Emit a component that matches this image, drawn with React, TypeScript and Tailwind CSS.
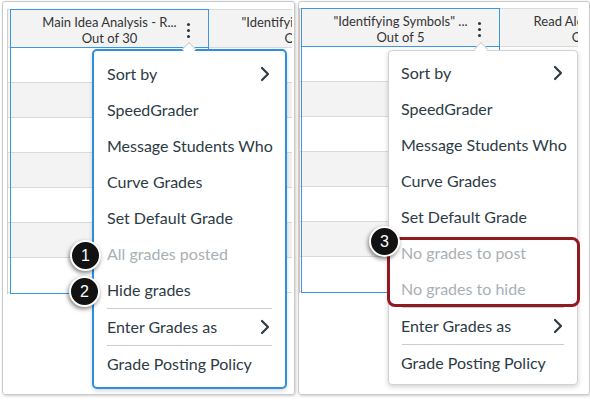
import React from "react";

const menuItems = [
  "Sort by",
  "SpeedGrader",
  "Message Students Who",
  "Curve Grades",
  "Set Default Grade",
];

function Chevron() {
  return (
    <svg width="10" height="16" viewBox="0 0 10 16" className="shrink-0">
      <path d="M2 2 L8 8 L2 14" fill="none" stroke="#2d3b45" strokeWidth="2.2" strokeLinecap="round" strokeLinejoin="round" />
    </svg>
  );
}

function Kebab() {
  return (
    <div className="absolute right-[18px] top-[13px] flex flex-col gap-[3px]">
      <span className="w-[3px] h-[3px] rounded-full bg-[#333]" />
      <span className="w-[3px] h-[3px] rounded-full bg-[#333]" />
      <span className="w-[3px] h-[3px] rounded-full bg-[#333]" />
    </div>
  );
}

function HeaderText({ title, sub }: { title: string; sub: string }) {
  return (
    <div className="flex flex-col items-center pt-[4px] text-[13px] leading-[16px] text-[#333] whitespace-nowrap">
      <span>{title}</span>
      <span>{sub}</span>
    </div>
  );
}

function Rows({ selected }: { selected?: boolean }) {
  return (
    <>
      {Array.from({ length: 7 }).map((_, i) => (
        <div
          key={i}
          className={`h-[35px] ${i === 6 && selected ? "h-[34px]" : "border-b border-[#dadada]"} ${
            i % 2 === 1 ? "bg-[#f3f3f3]" : "bg-white"
          }`}
        />
      ))}
    </>
  );
}

function Grid({
  sliver,
  sliverColor,
  title,
  sub,
  nextTitle,
  nextSub,
  width,
  mt,
}: {
  sliver: string;
  sliverColor: string;
  title: string;
  sub: string;
  nextTitle: string;
  nextSub: string;
  width: string;
  mt: string;
}) {
  return (
    <div className={`flex overflow-hidden ${width} ${mt}`}>
      <div className={`${sliver} shrink-0 border-l ${sliverColor}`}>
        <div className="h-[39px] border-y border-[#dadada] bg-[#f3f3f3]" />
        <Rows />
      </div>
      <div className="w-[199px] shrink-0 border border-[#3b97e3]">
        <div className="relative h-[38px] border-b border-[#3b97e3] bg-[#f3f3f3]">
          <HeaderText title={title} sub={sub} />
          <Kebab />
        </div>
        <Rows selected />
      </div>
      <div className="w-[200px] shrink-0">
        <div className="h-[39px] border-y border-r border-[#dadada] bg-[#f3f3f3] overflow-hidden">
          <HeaderText title={nextTitle} sub={nextSub} />
        </div>
        <Rows />
      </div>
    </div>
  );
}

function Badge({ n, className }: { n: number; className: string }) {
  return (
    <div
      className={`absolute z-20 rounded-full bg-[#121212] border-2 border-white shadow-[-1px_2px_4px_rgba(0,0,0,0.5)] flex items-center justify-center text-white text-[16px] font-['Liberation_Sans',sans-serif] ${className}`}
    >
      {n}
    </div>
  );
}

function Item({ label, muted, chevron }: { label: string; muted?: boolean; chevron?: boolean }) {
  return (
    <div className={`h-[36px] flex items-center justify-between ${muted ? "text-[#a9b0b5]" : "text-[#2d3b45]"}`}>
      <span className="whitespace-nowrap">{label}</span>
      {chevron && <Chevron />}
    </div>
  );
}

function Menu({
  className,
  posted,
  hidden,
  caretLeft,
  pad,
}: {
  className: string;
  posted: string;
  hidden: string;
  caretLeft: string;
  pad: string;
}) {
  return (
    <div className={`absolute z-10 bg-white text-[16px] ${className}`}>
      <span
        className={`absolute top-[-7px] ${caretLeft} w-[10px] h-[10px] rotate-45 bg-white border-l border-t border-[#cfcfcf]`}
      />
      <div className={pad}>
        {menuItems.map((m, i) => (
          <Item key={m} label={m} chevron={i === 0} />
        ))}
        <Item label={posted} muted />
        <Item label={hidden} muted={hidden.startsWith("No")} />
      </div>
      <div className="mx-[13px] border-t border-[#c7cdd1]" />
      <div className={pad}>
        <Item label="Enter Grades as" chevron />
      </div>
      <div className="mx-[13px] border-t border-[#c7cdd1]" />
      <div className={pad}>
        <Item label="Grade Posting Policy" />
      </div>
    </div>
  );
}

export default function App() {
  return (
    <div className="w-[590px] h-[400px] bg-white flex gap-[3px] pl-[2px] pt-[1px] font-['Lato',sans-serif]">
      <div className="relative w-[293px] h-[394px] shrink-0 border border-[#c9c9c9] rounded-[3px] shadow-[1px_1px_3px_rgba(0,0,0,0.2)] overflow-hidden">
        <div className="pl-[4px]">
          <Grid
            sliver="w-[3px]"
            sliverColor="border-[#cfcfcf]"
            title="Main Idea Analysis - R..."
            sub="Out of 30"
            nextTitle={'"Identifying Symbols" ...'}
            nextSub="Out of 5"
            width="w-[285px]"
            mt="mt-[7px]"
          />
        </div>
        <Menu
          className="left-[89px] top-[47px] w-[195px] border-2 border-[#2b90e0] rounded-[5px] pt-[5px] pb-[5px] shadow-[0_2px_4px_rgba(0,0,0,0.15)]"
          posted="All grades posted"
          hidden="Hide grades"
          caretLeft="left-[90px]"
          pad="pl-[13px] pr-[15px]"
        />
        <Badge n={1} className="left-[67px] top-[238px] w-[31px] h-[31px]" />
        <Badge n={2} className="left-[66px] top-[274px] w-[31px] h-[31px]" />
      </div>

      <div className="relative w-[292px] h-[394px] shrink-0 border border-[#c9c9c9] rounded-[3px] shadow-[1px_1px_3px_rgba(0,0,0,0.2)] overflow-hidden">
        <Grid
          sliver="w-[2px]"
          sliverColor="border-[#e6b9b9]"
          title={'"Identifying Symbols" ...'}
          sub="Out of 5"
          nextTitle="Read Aloud Assignme..."
          nextSub="Out of 10"
          width="w-[279px]"
          mt="mt-[6px]"
        />
        <Menu
          className="left-[89px] top-[48px] w-[190px] border border-[#d2d2d2] rounded-[4px] pt-[4px] pb-[3px] shadow-[0_2px_5px_rgba(0,0,0,0.18)]"
          posted="No grades to post"
          hidden="No grades to hide"
          caretLeft="left-[87px]"
          pad="pl-[12px] pr-[14px]"
        />
        <div className="absolute z-10 left-[88px] top-[235px] w-[193px] h-[70px] border-[3px] border-[#901a20] rounded-[8px]" />
        <Badge n={3} className="left-[70px] top-[224px] w-[31px] h-[31px]" />
      </div>
    </div>
  );
}
